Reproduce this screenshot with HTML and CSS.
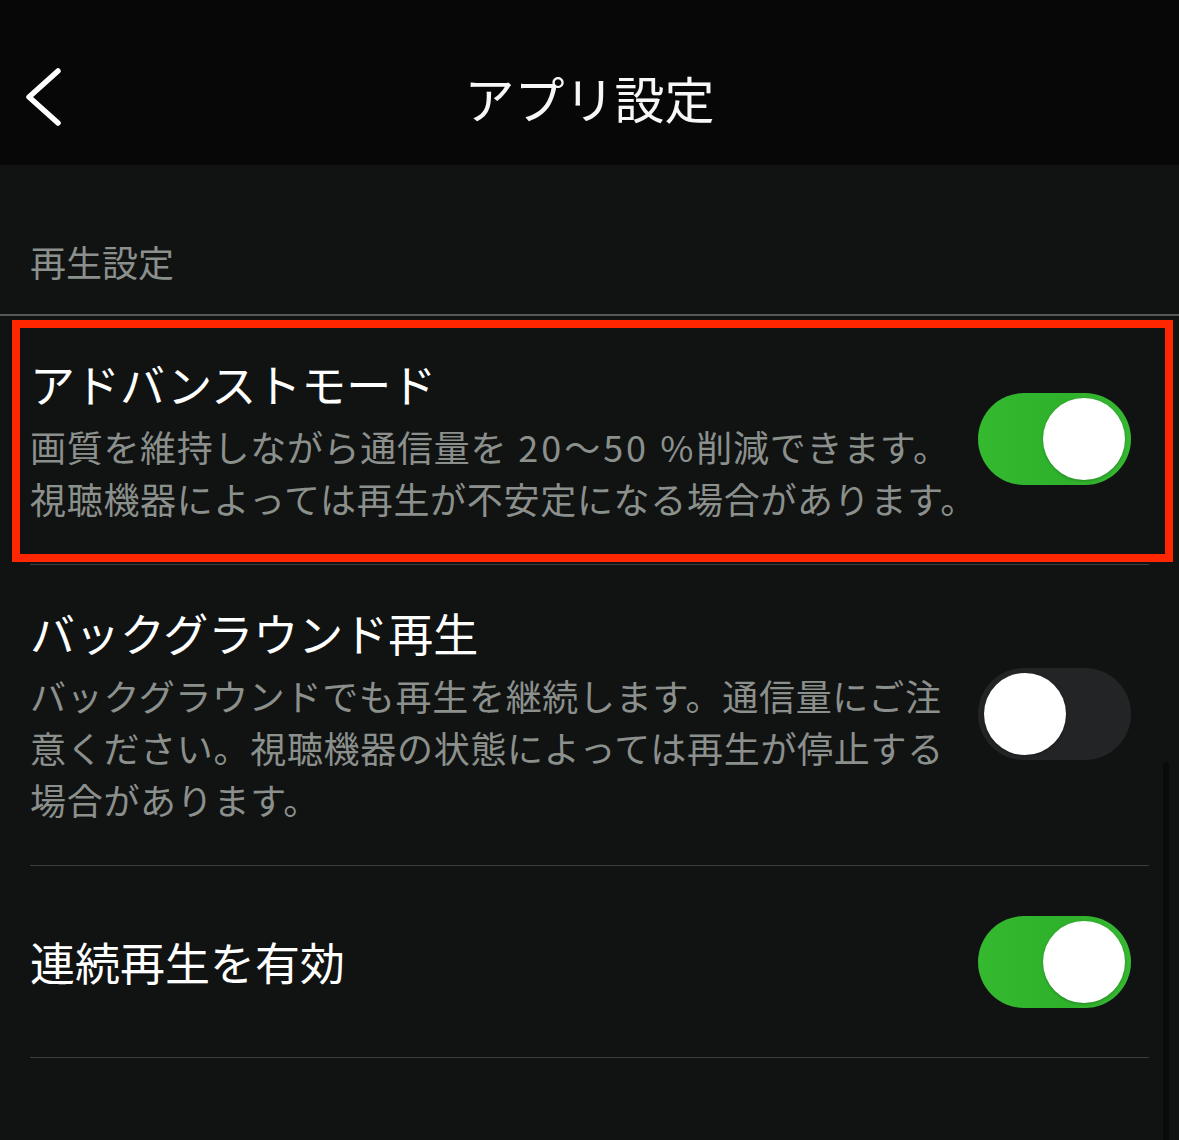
FILE: index.html
```html
<!DOCTYPE html>
<html lang="ja">
<head>
    <meta charset="UTF-8">
    <meta name="viewport" content="width=device-width, initial-scale=1.0">
    <title>アプリ設定</title>
    <link rel="stylesheet" href="styles.css">
</head>
<body>

    <!-- Navigation bar -->
    <header class="nav-bar">
        <button class="back-btn" aria-label="戻る">
            <svg width="38" height="58" viewBox="0 0 38 58">
                <polyline points="33,3 4,29 33,55" fill="none" stroke="#fff" stroke-width="5.5" stroke-linecap="round" stroke-linejoin="round"/>
            </svg>
        </button>
        <h1 class="nav-title">アプリ設定</h1>
        <div></div>
    </header>

    <!-- Settings list -->
    <main class="settings">
        <div class="section-label">再生設定</div>

        <div class="setting-row">
            <div class="setting-text">
                <div class="setting-title">アドバンストモード</div>
                <p class="setting-desc">画質を維持しながら通信量を<span class="num"> 20〜50 %</span>削減できます。<br>視聴機器によっては再生が不安定になる場合があります。</p>
            </div>
            <span class="switch on"><span class="knob"></span></span>
            <div class="highlight"></div>
        </div>
        <hr class="divider">

        <div class="setting-row">
            <div class="setting-text">
                <div class="setting-title">バックグラウンド再生</div>
                <p class="setting-desc">バックグラウンドでも再生を継続します。通信量にご注<br>意ください。視聴機器の状態によっては再生が停止する<br>場合があります。</p>
            </div>
            <span class="switch"><span class="knob"></span></span>
        </div>
        <hr class="divider">

        <div class="setting-row single">
            <div class="setting-text">
                <div class="setting-title">連続再生を有効</div>
            </div>
            <span class="switch on"><span class="knob"></span></span>
        </div>
        <hr class="divider">
    </main>

    <div class="scroll-indicator"></div>

</body>
</html>
```

FILE: styles.css
```css
body {
    background-color: #111313;
    color: #fff;
    font-family: "Noto Sans CJK JP", "Noto Sans", sans-serif;
    margin: 0;
    padding: 0;
    min-height: 100vh;
}

/* Navigation bar */
.nav-bar {
    background-color: #070707;
    height: 137px;
    padding-top: 28px;
    display: grid;
    grid-template-columns: 1fr auto 1fr;
    align-items: center;
}

.back-btn {
    background: none;
    border: none;
    padding: 0 0 0 25px;
    justify-self: start;
    display: flex;
    cursor: pointer;
}

.nav-title {
    margin: 0;
    font-size: 50px;
    font-weight: 400;
    line-height: 60px;
    color: #f7f7f7;
}

/* Section header */
.section-label {
    font-size: 36px;
    line-height: 48px;
    color: #8b908c;
    padding: 72px 30px 29px;
    border-bottom: 2px solid #585858;
}

/* Rows */
.setting-row {
    position: relative;
    display: flex;
    align-items: center;
    gap: 10px;
    padding: 38px 48px 40px 30px;
}

.setting-row.single {
    padding-top: 50px;
    padding-bottom: 49px;
}

.setting-text {
    flex: 1;
    min-width: 0;
    display: flex;
    flex-direction: column;
    gap: 6px;
}

.setting-title {
    font-size: 45px;
    line-height: 60px;
    color: #fff;
    white-space: nowrap;
}

.setting-desc {
    margin: 0;
    font-size: 36px;
    line-height: 52px;
    letter-spacing: 0.7px;
    color: #8b908c;
    white-space: nowrap;
}

.setting-desc .num {
    letter-spacing: 3px;
}

.divider {
    border: none;
    height: 1px;
    background-color: #3c3d3d;
    margin: 0 30px;
}

/* Toggle switch */
.switch {
    flex-shrink: 0;
    width: 153px;
    height: 92px;
    box-sizing: border-box;
    padding: 5px 6px;
    border-radius: 46px;
    background-color: #232426;
    display: flex;
    align-items: center;
    justify-content: flex-start;
}

.switch.on {
    background: linear-gradient(90deg, #34b92f 0%, #2fb12b 60%, #36b832 100%);
    justify-content: flex-end;
}

.knob {
    width: 82px;
    height: 82px;
    border-radius: 50%;
    background-color: #fff;
    box-shadow: 0 1px 3px rgba(0, 0, 0, 0.25);
}

/* Red annotation frame */
.highlight {
    position: absolute;
    top: 4px;
    bottom: 2px;
    left: 12px;
    right: 6px;
    border: 8px solid #ff2600;
    pointer-events: none;
}

/* Scroll indicator */
.scroll-indicator {
    position: fixed;
    top: 762px;
    bottom: 0;
    right: 10px;
    width: 6px;
    border-radius: 3px 3px 0 0;
    background-color: #0a0a0a;
}
```
